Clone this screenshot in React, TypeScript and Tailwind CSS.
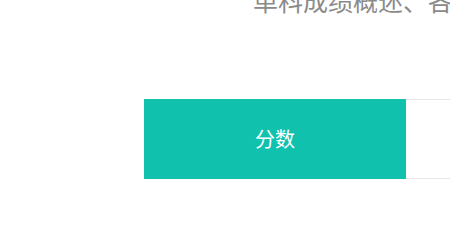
export default function App() {
  return (
    <div
      className="w-[450px] h-[234px] overflow-hidden bg-white"
      style={{ fontFamily: '"Noto Sans CJK SC", "Noto Sans", sans-serif' }}
    >
      <p className="-mt-[12px] pl-[253px] whitespace-nowrap text-[25px] leading-none text-[#8a8a8a]">
        单科成绩概述、各科成绩分析
      </p>
      <div className="mt-[86px] ml-[144px] flex w-[600px]">
        <div className="w-[262px] h-[80px] flex items-center justify-center bg-[#10c1ae] text-white text-[20px]">
          分数
        </div>
        <div className="flex-1 h-[80px] border-y border-[#e6e6e6] bg-white"></div>
      </div>
    </div>
  );
}
